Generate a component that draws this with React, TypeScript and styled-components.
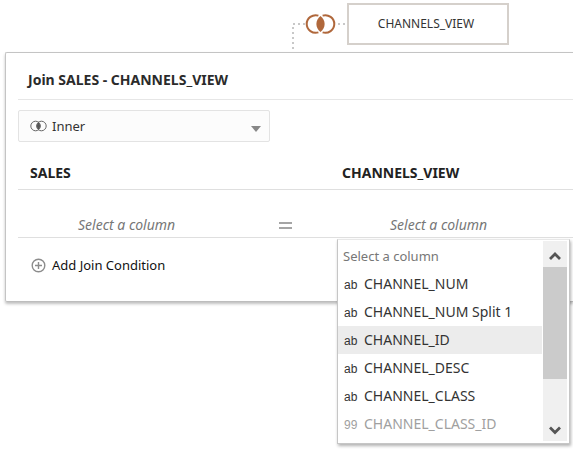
import React, { useState } from "react";
import styled, { createGlobalStyle } from "styled-components";

const GlobalStyle = createGlobalStyle`
  * { box-sizing: border-box; }
  body {
    margin: 0;
    background: #fff;
    color: #333;
    font-family: "Noto Sans", "Open Sans", sans-serif;
    font-size: 13px;
    line-height: 20px;
  }
  button, select { font: inherit; color: inherit; }
`;

const Page = styled.main`
  display: flex;
  flex-direction: column;
  min-height: 100vh;
`;

const Diagram = styled.div`
  display: flex;
  align-items: flex-start;
  height: 52px;
  padding: 3px 0 0 292px;
`;

const Elbow = styled.svg`
  flex: none;
  width: 13px;
  height: 49px;
`;

const JoinButton = styled.button`
  flex: none;
  display: flex;
  height: 42px;
  padding: 0;
  border: 0;
  background: none;
  align-items: center;
`;

const Link = styled.svg`
  flex: none;
  width: 11px;
  height: 42px;
`;

const TableNode = styled.button`
  width: 162px;
  height: 42px;
  padding: 0 4px 0 0;
  border: 2px solid #d5d0cb;
  background: #fff;
  font-size: 12px;
`;

const Panel = styled.section`
  margin-left: 5px;
  padding: 0 0 26px 12px;
  border: 1px solid #c4c4c4;
  border-right: 0;
  border-bottom-color: #bdbdbd;
  border-radius: 2px 0 0 2px;
  box-shadow: 0 2px 3px rgba(0, 0, 0, 0.25);
`;

const Title = styled.h1`
  margin: 0;
  padding: 17px 10px 9px;
  border-bottom: 1px solid #e6e6e6;
  font-size: 14px;
  line-height: 20px;
  color: #2b2b2b;
`;

const TypeField = styled.label`
  display: grid;
  grid-template-columns: 34px 1fr 18px;
  align-items: center;
  width: 252px;
  height: 32px;
  margin-top: 10px;
  border: 1px solid #e3e3e3;
  border-radius: 2px;
  background: #fcfcfc;

  svg { grid-row: 1; pointer-events: none; z-index: 1; }
  svg:first-child { grid-column: 1; margin-left: 11px; }
  svg:last-child { grid-column: 3; margin-top: 6px; }
`;

const TypeSelect = styled.select`
  grid-row: 1;
  grid-column: 1 / -1;
  height: 30px;
  padding: 0 24px 0 33px;
  border: 0;
  appearance: none;
  background: transparent;
  outline: none;
`;

const ConditionRow = styled.div<{ $head?: boolean }>`
  display: grid;
  grid-template-columns: 222fr 90px 243fr;
  align-items: end;
  height: 48px;
  padding-bottom: ${(p) => (p.$head ? 6 : 2)}px;
  border-bottom: 1px solid #dfdfdf;
`;

const TableName = styled.h2<{ $last?: boolean }>`
  grid-column: ${(p) => (p.$last ? 3 : 1)};
  margin: 0;
  padding-left: 12px;
  font-size: 14px;
  line-height: 20px;
  color: #222;
`;

const Cell = styled.div`
  position: relative;
  display: flex;
  padding-left: 60px;
`;

const ColumnButton = styled.button`
  padding: 0;
  border: 0;
  background: none;
  font-size: 14px;
  font-style: italic;
  color: #777;
`;

const Operator = styled.button`
  display: flex;
  justify-content: center;
  padding: 0;
  margin-bottom: 6px;
  border: 0;
  background: none;
`;

const AddButton = styled.button`
  display: flex;
  align-items: center;
  gap: 6px;
  margin-top: 17px;
  padding: 0 0 0 13px;
  border: 0;
  background: none;
  color: #111;
`;

const Menu = styled.div`
  position: absolute;
  top: 24px;
  left: 7px;
  right: 3px;
  z-index: 2;
  display: flex;
  gap: 1px;
  padding: 1px 2px 2px 0;
  border: 1px solid #c6c6c6;
  border-top-color: #e8e8e8;
  background: #fff;
  box-shadow: 1px 2px 3px rgba(0, 0, 0, 0.3);
`;

const Options = styled.ul`
  flex: 1;
  height: 200px;
  margin: 0;
  padding: 1px 0 0;
  overflow: hidden;
  list-style: none;
`;

const Option = styled.li<{ $active?: boolean; $muted?: boolean }>`
  display: flex;
  align-items: center;
  height: 28px;
  padding: 0 6px;
  background: ${(p) => (p.$active ? "#ececec" : "transparent")};
  color: ${(p) => (p.$muted ? "#a0a0a0" : "#333")};
  font-size: 14px;
  white-space: nowrap;
`;

const Prompt = styled(Option)`
  padding-left: 5px;
  color: #777;
  font-size: 13px;
`;

const Kind = styled.span`
  flex: none;
  width: 20px;
  padding-top: 2px;
  font-family: "Liberation Sans", Arial, sans-serif;
  font-size: 12px;
`;

const Scrollbar = styled.div`
  display: flex;
  flex-direction: column;
  width: 24px;
  background: #f0f0f0;
`;

const ScrollButton = styled.button`
  display: flex;
  align-items: center;
  justify-content: center;
  width: 24px;
  height: 26px;
  padding: 4px 0 0;
  border: 0;
  background: none;
`;

const Thumb = styled.div`
  height: 112px;
  margin-bottom: auto;
  background: #cbcbcb;
`;

function VennIcon() {
  return (
    <svg width="31" height="20" viewBox="0 0 31 20" fill="none" aria-hidden="true">
      <path d="M13.4 1.6A9 8.8 0 1 0 13.4 18.4" stroke="#b0683c" strokeWidth="2" />
      <path d="M17.6 1.6A9 8.8 0 1 1 17.6 18.4" stroke="#b0683c" strokeWidth="2" />
      <path d="M15.5 2C21 6.5 21 13.5 15.5 18C10 13.5 10 6.5 15.5 2Z" fill="#b0683c" />
    </svg>
  );
}

function SmallVennIcon() {
  return (
    <svg width="17" height="12" viewBox="0 0 17 12" fill="none" aria-hidden="true">
      <path d="M8.5 2.1C10.8 4.4 10.8 7.6 8.5 9.9C6.2 7.6 6.2 4.4 8.5 2.1Z" fill="#555" />
      <circle cx="5.6" cy="6" r="4.8" stroke="#666" />
      <circle cx="11.4" cy="6" r="4.8" stroke="#666" />
    </svg>
  );
}

function Chevron({ down }: { down?: boolean }) {
  return (
    <svg width="12" height="9" viewBox="0 0 12 9" fill="none" aria-hidden="true">
      <path d={down ? "M1 1.5L6 6.5L11 1.5" : "M1 7L6 2L11 7"} stroke="#555" strokeWidth="2.8" />
    </svg>
  );
}

const columns = [
  { kind: "ab", name: "CHANNEL_NUM" },
  { kind: "ab", name: "CHANNEL_NUM Split 1" },
  { kind: "ab", name: "CHANNEL_ID" },
  { kind: "ab", name: "CHANNEL_DESC" },
  { kind: "ab", name: "CHANNEL_CLASS" },
  { kind: "99", name: "CHANNEL_CLASS_ID", muted: true },
];

function ColumnMenu() {
  const [active, setActive] = useState("CHANNEL_ID");
  return (
    <Menu>
      <Options role="listbox" aria-label="CHANNELS_VIEW columns" id="column-options">
        <Prompt role="option" aria-disabled="true">Select a column</Prompt>
        {columns.map((c) => (
          <Option
            key={c.name}
            role="option"
            aria-selected={active === c.name}
            aria-disabled={c.muted}
            $active={active === c.name}
            $muted={c.muted}
            onMouseEnter={() => !c.muted && setActive(c.name)}
          >
            <Kind>{c.kind}</Kind>
            {c.name}
          </Option>
        ))}
      </Options>
      <Scrollbar>
        <ScrollButton aria-label="Scroll up"><Chevron /></ScrollButton>
        <Thumb />
        <ScrollButton aria-label="Scroll down"><Chevron down /></ScrollButton>
      </Scrollbar>
    </Menu>
  );
}

export default function App() {
  const [open, setOpen] = useState(true);
  return (
    <Page>
      <GlobalStyle />
      <Diagram>
        <Elbow viewBox="0 0 13 49" aria-hidden="true">
          <path d="M13 21H1V49" fill="none" stroke="#c8c8c8" strokeWidth="2" strokeDasharray="2 3" />
        </Elbow>
        <JoinButton aria-label="Inner join">
          <VennIcon />
        </JoinButton>
        <Link viewBox="0 0 11 42" aria-hidden="true">
          <path d="M2 21H11" stroke="#c8c8c8" strokeWidth="2" strokeDasharray="2 3" />
        </Link>
        <TableNode>CHANNELS_VIEW</TableNode>
      </Diagram>
      <Panel>
        <Title>Join SALES - CHANNELS_VIEW</Title>
        <TypeField>
          <SmallVennIcon />
          <TypeSelect aria-label="Join type" defaultValue="Inner">
            <option>Inner</option>
            <option>Left</option>
            <option>Right</option>
            <option>Full Outer</option>
          </TypeSelect>
          <svg width="10" height="6" viewBox="0 0 10 6" aria-hidden="true">
            <path d="M0 0H10L5 6Z" fill="#888" />
          </svg>
        </TypeField>
        <ConditionRow $head>
          <TableName>SALES</TableName>
          <TableName $last>CHANNELS_VIEW</TableName>
        </ConditionRow>
        <ConditionRow>
          <Cell>
            <ColumnButton>Select a column</ColumnButton>
          </Cell>
          <Operator aria-label="Equals">
            <svg width="13" height="7" viewBox="0 0 13 7" aria-hidden="true">
              <path d="M0 1H13M0 6H13" stroke="#888" strokeWidth="1.6" />
            </svg>
          </Operator>
          <Cell>
            <ColumnButton
              aria-haspopup="listbox"
              aria-expanded={open}
              aria-controls="column-options"
              onClick={() => setOpen(!open)}
            >
              Select a column
            </ColumnButton>
            {open && <ColumnMenu />}
          </Cell>
        </ConditionRow>
        <AddButton>
          <svg width="15" height="15" viewBox="0 0 15 15" fill="none" aria-hidden="true">
            <circle cx="7.5" cy="7.5" r="6.3" stroke="#8c8c8c" strokeWidth="1.4" />
            <path d="M7.5 4V11M4 7.5H11" stroke="#8c8c8c" strokeWidth="1.4" />
          </svg>
          Add Join Condition
        </AddButton>
      </Panel>
    </Page>
  );
}
